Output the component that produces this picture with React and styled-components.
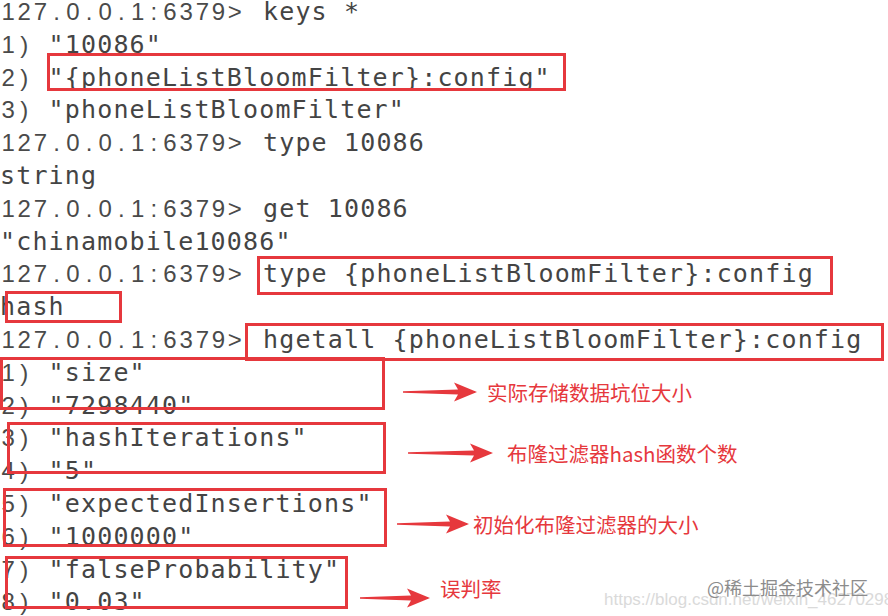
import React from "react";
import styled, { createGlobalStyle } from "styled-components";

const CELL = 16.2;
const RED = "#e6383d";

const lines = [
  { prompt: true, text: " keys *" },
  { label: "1)", text: ' "10086"' },
  { label: "2)", text: ' "{phoneListBloomFilter}:config"' },
  { label: "3)", text: ' "phoneListBloomFilter"' },
  { prompt: true, text: " type 10086" },
  { text: "string" },
  { prompt: true, text: " get 10086" },
  { text: '"chinamobile10086"' },
  { prompt: true, text: " type {phoneListBloomFilter}:config" },
  { text: "hash" },
  { prompt: true, text: " hgetall {phoneListBloomFilter}:config" },
  { label: "1)", text: ' "size"' },
  { label: "2)", text: ' "7298440"' },
  { label: "3)", text: ' "hashIterations"' },
  { label: "4)", text: ' "5"' },
  { label: "5)", text: ' "expectedInsertions"' },
  { label: "6)", text: ' "1000000"' },
  { label: "7)", text: ' "falseProbability"' },
  { label: "8)", text: ' "0.03"' },
];

// red highlight frames drawn over the terminal text
const boxes = [
  { x: 47, y: 53, w: 519, h: 38 },
  { x: 257, y: 256, w: 576, h: 39 },
  { x: 5, y: 291, w: 117, h: 32 },
  { x: 245, y: 323, w: 639, h: 38 },
  { x: 0, y: 357, w: 385, h: 53 },
  { x: 7, y: 422, w: 379, h: 52 },
  { x: 3, y: 488, w: 384, h: 59 },
  { x: 5, y: 556, w: 343, h: 53 },
];

// arrow + comment callouts
const notes = [
  { x: 403, y: 392, aw: 74, gap: 10, text: "实际存储数据坑位大小" },
  { x: 408, y: 453, aw: 85, gap: 14, text: "布隆过滤器hash函数个数" },
  { x: 397, y: 524, aw: 72, gap: 4, text: "初始化布隆过滤器的大小" },
  { x: 360, y: 598, aw: 70, gap: 10, text: "误判率", lift: 10 },
];

const Global = createGlobalStyle`
  html, body {
    margin: 0;
    padding: 0;
    background: #fff;
  }
`;

const Screen = styled.div`
  position: relative;
  width: 888px;
  height: 616px;
  overflow: hidden;
  background: #fff;
`;

const Terminal = styled.div`
  display: flex;
  flex-direction: column;
  margin-top: -4px;
  font-family: "DejaVu Sans Mono", monospace;
  font-size: 25px;
  letter-spacing: 1.15px;
  color: #444;
`;

const Line = styled.div`
  height: 32.8px;
  line-height: 32.8px;
  white-space: pre;
`;

const Cell = styled.span`
  display: inline-block;
  width: ${CELL}px;
  text-align: center;
  font-family: "Liberation Sans", Arial, sans-serif;
  font-size: 24px;
  letter-spacing: 0;
  color: #4a4a4a;
`;

const PromptWrap = styled.span`
  margin-right: 4px;
`;

const Box = styled.div`
  position: absolute;
  left: ${(p) => p.$x}px;
  top: ${(p) => p.$y}px;
  width: ${(p) => p.$w}px;
  height: ${(p) => p.$h}px;
  box-sizing: border-box;
  border: 3px solid ${RED};
`;

const Callout = styled.div`
  position: absolute;
  left: ${(p) => p.$x}px;
  top: ${(p) => p.$y - 11}px;
  height: 22px;
  display: flex;
  align-items: center;
  gap: ${(p) => p.$gap}px;
`;

const NoteText = styled.span`
  font-family: "Noto Sans CJK SC", "Noto Sans", sans-serif;
  font-size: 20.5px;
  line-height: 22px;
  color: ${RED};
  white-space: nowrap;
  margin-top: ${(p) => -(p.$lift || 0) * 2}px;
`;

const Credits = styled.div`
  position: absolute;
  right: 0;
  top: 576px;
  width: 284px;
  display: flex;
  flex-direction: column;
  align-items: flex-end;
`;

const Watermark = styled.span`
  font-family: "Noto Sans CJK SC", sans-serif;
  font-size: 18px;
  line-height: 22px;
  margin-right: 20px;
  color: #8c8c8c;
  white-space: nowrap;
  position: relative;
  z-index: 1;
`;

const Url = styled.span`
  align-self: flex-start;
  margin-top: -8px;
  font-family: "Liberation Sans", Arial, sans-serif;
  font-size: 17px;
  line-height: 20px;
  color: #dadada;
  white-space: nowrap;
`;

function Sans({ text }) {
  return text.split("").map((ch, i) => <Cell key={i}>{ch}</Cell>);
}

function Arrow({ w }) {
  const hs = w - 19;
  const pts = `0,10.2 ${hs},8.4 ${hs - 4},1.5 ${w},11 ${hs - 4},20.5 ${hs},13.6 0,11.8`;
  return (
    <svg width={w} height={22} viewBox={`0 0 ${w} 22`}>
      <polygon points={pts} fill={RED} />
    </svg>
  );
}

export default function App() {
  return (
    <Screen>
      <Global />
      <Terminal>
        {lines.map((l, i) => (
          <Line key={i}>
            {l.prompt && (
              <PromptWrap>
                <Sans text="127.0.0.1:6379>" />
              </PromptWrap>
            )}
            {l.label && <Sans text={l.label} />}
            {l.text}
          </Line>
        ))}
      </Terminal>

      {boxes.map((b, i) => (
        <Box key={i} $x={b.x} $y={b.y} $w={b.w} $h={b.h} />
      ))}

      {notes.map((n, i) => (
        <Callout key={i} $x={n.x} $y={n.y} $gap={n.gap}>
          <Arrow w={n.aw} />
          <NoteText $lift={n.lift}>{n.text}</NoteText>
        </Callout>
      ))}

      <Credits>
        <Watermark>@稀土掘金技术社区</Watermark>
        <Url>https://blog.csdn.net/weixin_46270298</Url>
      </Credits>
    </Screen>
  );
}
